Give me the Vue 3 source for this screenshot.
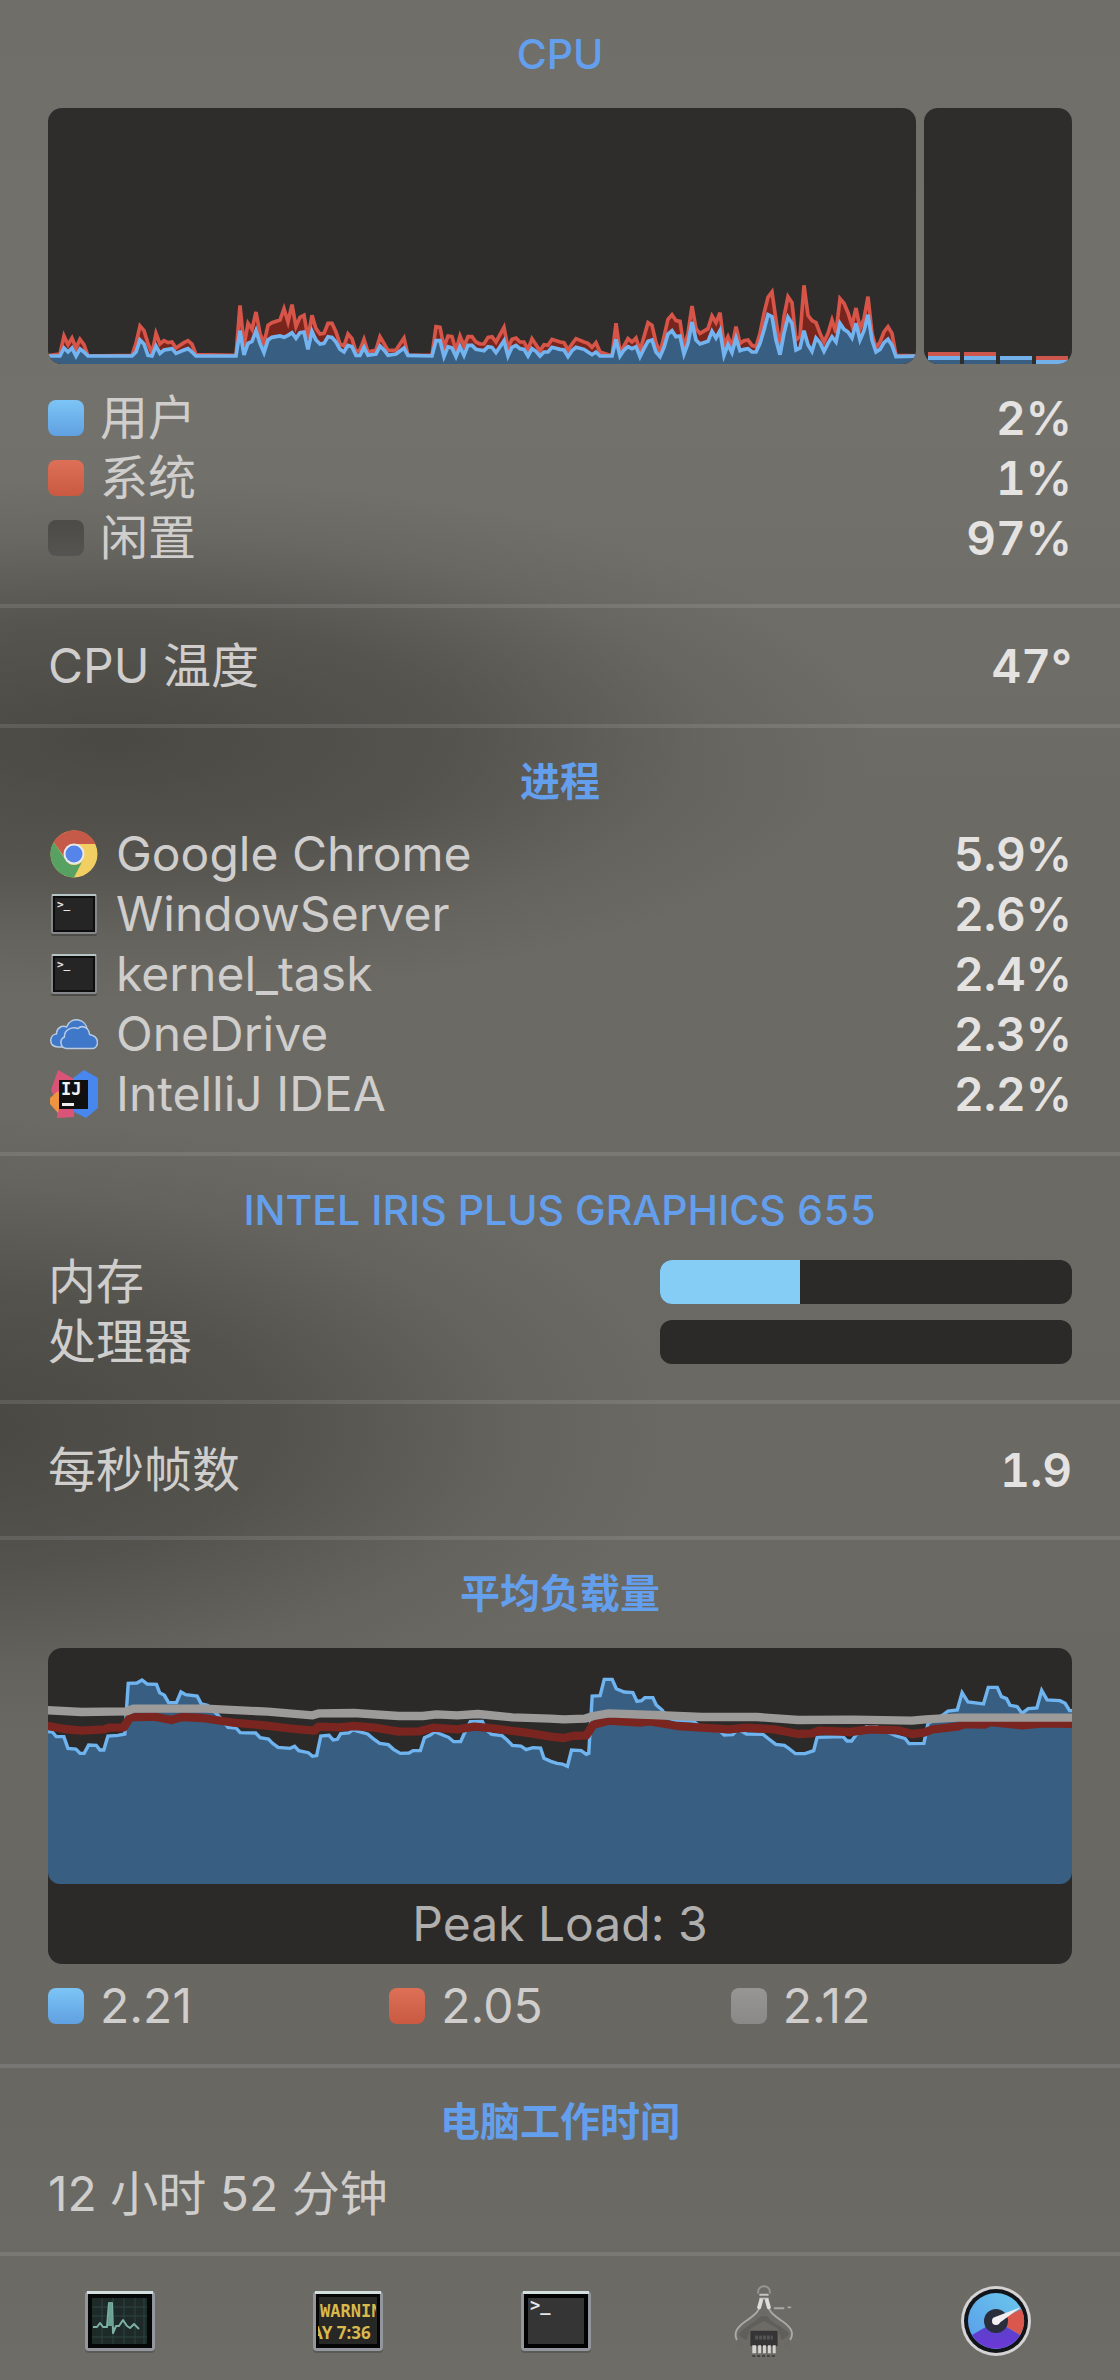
<script setup>
const usage = [
  { label: '用户', value: '2%', tone: 'blue' },
  { label: '系统', value: '1%', tone: 'red' },
  { label: '闲置', value: '97%', tone: 'dark' },
]

const processes = [
  { name: 'Google Chrome', value: '5.9%', icon: 'chrome' },
  { name: 'WindowServer', value: '2.6%', icon: 'terminal' },
  { name: 'kernel_task', value: '2.4%', icon: 'terminal' },
  { name: 'OneDrive', value: '2.3%', icon: 'onedrive' },
  { name: 'IntelliJ IDEA', value: '2.2%', icon: 'intellij' },
]

const gpu = [
  { label: '内存', percent: 34 },
  { label: '处理器', percent: 0 },
]

const loads = [
  { value: '2.21', tone: 'blue' },
  { value: '2.05', tone: 'red' },
  { value: '2.12', tone: 'grey' },
]

const cores = [
  ['red', 'light', 'deep'],
  ['red', 'light', 'deep'],
  ['light', 'deep'],
  ['red', 'light'],
]

// Each series is stored in two halves; the second half starts at its own zero.
const join = (first, second, offset) =>
  first + ' ' + second.split(' ').map((p) => {
    const [x, y] = p.split(',').map(Number)
    return `${x + offset},${y}`
  }).join(' ')

const userLine = join(
  '12,288 60,288 72,264 84,276 96,264 108,288 120,267 132,276 144,288 276,288 288,276 300,240 312,252 324,286 336,288 348,258 360,280 372,270 384,268 396,266 408,280 432,270 444,266 456,276 468,288 588,288 600,212 612,285 624,250 636,244 648,212 660,250 672,278 684,240 696,232 720,228 732,232 744,226 756,218 768,235 780,218 792,216 804,268 816,214 828,240 840,252 852,250 864,230 876,232 888,246 900,268 912,276 924,256 936,260 948,286 960,286 972,262 984,286 1008,282 1020,258 1032,270 1044,286 1068,282 1092,264 1104,286 1176,288 1188,242 1200,242 1212,290 1224,260 1236,264 1248,290 1260,260 1272,286 1284,256 1296,256 1308,268',
  '0,270 12,272 24,260 36,262 48,278 72,242 84,288 96,262 108,256 120,266 132,268 144,288 156,266 168,274 180,288 192,276 204,276 216,262 240,268 252,270 264,290 276,272 288,262 312,268 324,276 336,284 348,276 360,288 396,288 408,238 420,288 432,270 444,260 456,266 468,260 480,290 492,266 504,244 516,240 528,276 540,290 552,262 564,222 576,212 588,230 600,228 612,282 624,250 636,186 648,240 660,252 684,244 696,214 708,234 720,212 732,286 744,254 756,278 768,234 780,272 792,268 804,266 816,276 828,276 840,250 852,210 864,164 876,170 888,240 900,284 912,220 924,172 936,190 948,270 960,264 972,212 984,254 996,274 1008,234 1020,248 1032,274 1044,250 1056,230 1068,246 1080,190 1092,208 1104,216 1116,234 1128,190 1140,240 1152,212 1164,164 1176,240 1188,276 1200,268 1212,248 1224,238 1236,256 1248,290 1320,288',
  1320,
)
const systemLine = join(
  '12,288 60,282 72,228 84,254 96,234 108,264 120,238 132,254 144,288 276,286 288,250 300,198 312,212 324,250 336,280 348,220 360,252 372,242 384,248 396,246 408,264 432,248 444,242 456,252 468,284 588,286 600,136 612,258 624,190 636,208 648,156 660,220 672,250 684,196 696,188 720,180 732,146 744,186 756,134 768,200 780,172 792,166 804,235 816,166 828,206 840,222 852,220 864,190 876,190 888,216 900,252 912,258 924,222 936,236 948,276 960,270 972,238 984,276 1008,270 1020,230 1032,250 1044,272 1068,270 1092,234 1104,286 1176,286 1188,200 1200,202 1212,262 1224,228 1236,230 1248,272 1260,228 1272,258 1284,230 1296,230 1308,246',
  '0,252 12,252 24,232 36,230 48,246 72,202 84,264 96,238 108,234 120,246 132,246 144,268 156,236 168,254 180,272 192,254 204,256 216,238 240,246 252,248 264,270 276,252 288,236 312,246 324,250 336,262 348,248 360,276 396,288 408,190 420,276 432,258 444,236 456,246 468,234 480,272 492,230 504,188 516,196 528,248 540,278 552,230 564,178 576,164 588,182 600,184 612,262 624,220 636,138 648,206 660,220 684,206 696,168 708,188 720,158 732,256 744,230 756,260 768,200 780,250 792,242 804,240 816,256 828,260 840,220 852,160 864,112 876,96 888,180 900,264 912,170 924,110 936,128 948,240 960,230 972,76 984,166 996,182 1008,188 1020,220 1032,246 1044,220 1056,180 1068,218 1080,116 1092,130 1104,158 1116,196 1128,144 1140,206 1152,176 1164,110 1176,220 1188,264 1200,246 1212,216 1224,200 1236,220 1248,286 1320,288',
  1320,
)

const loadOne = join(
  '40,303 65,306 76,320 98,320 110,355 133,357 145,370 157,370 170,345 192,346 203,360 214,360 226,318 255,316 275,312 285,160 310,159 325,150 340,162 367,163 376,188 390,196 402,218 425,218 438,186 452,194 485,198 497,222 515,226 545,255 575,292 598,294 610,308 655,309 668,323 692,327 704,340 720,352 755,355 768,349 780,362 808,368 820,379 832,377 844,318 868,316 880,330 892,328 902,311 925,309 937,300 955,305 980,312 995,325 1015,340 1040,344 1055,358 1075,370 1100,369 1112,362 1133,362 1145,323 1162,315 1175,305 1198,315 1215,322 1230,335 1250,335 1260,312 1278,275 1313,274 1325,300 1340,313 1370,317 1385,330 1400,346 1425,348 1440,359 1460,353 1482,354 1492,385 1512,394 1530,400',
  '35,402 50,409 62,360 90,362 105,373 112,370 122,198 145,197 157,148 180,148 192,176 215,186 240,188 252,214 265,212 275,203 298,203 308,225 325,240 340,262 362,272 415,273 430,285 495,305 505,315 530,314 545,298 570,312 618,313 632,325 655,343 680,346 695,357 712,371 740,371 765,362 775,322 850,320 862,333 875,333 888,315 918,290 948,290 965,300 1005,318 1030,325 1042,341 1085,340 1097,280 1140,255 1155,243 1182,240 1196,188 1213,216 1258,222 1272,172 1298,172 1310,200 1325,206 1335,226 1356,230 1370,250 1388,236 1413,234 1427,181 1443,210 1480,212 1495,220 1508,242 1530,242',
  1510,
)
const loadFive = join(
  '40,286 100,297 150,302 215,298 230,293 272,292 290,262 360,260 410,270 440,261 500,264 590,278 680,286 760,296 825,302 838,290 900,292 940,288 1000,293 1070,305 1130,304 1170,293 1240,298 1290,290 1350,296 1440,308 1490,316',
  '0,320 40,324 65,318 105,316 125,284 170,272 260,278 290,274 370,288 440,293 520,298 570,293 650,298 720,312 760,310 780,302 870,306 930,298 1010,301 1050,312 1085,308 1110,298 1180,290 1205,282 1260,284 1280,276 1370,286 1430,280 1530,282',
  1510,
)
const loadFifteen = join(
  '40,240 150,246 280,244 300,236 510,236 690,245 820,256 840,250 940,249 1070,258 1140,258 1180,253 1240,256 1300,252 1400,262',
  '0,266 40,268 100,266 125,258 170,250 300,255 440,261 600,261 720,270 880,269 1050,272 1090,268 1180,263 1530,263',
  1510,
)
</script>

<template>
  <main class="panel">
    <section class="block">
      <h2 class="title lead">CPU</h2>
      <div class="cpu">
        <svg class="history" viewBox="24 -456 2604 768" preserveAspectRatio="none" role="img" aria-label="CPU">
          <polygon :points="`12,312 ${systemLine} 2640,312`" fill="#78251d" />
          <polyline :points="systemLine" fill="none" stroke="#d65448" stroke-width="11" />
          <polygon :points="`12,312 ${userLine} 2640,312`" fill="#385f82" />
          <polyline :points="userLine" fill="none" stroke="#73b4f0" stroke-width="11" />
        </svg>
        <div class="cores">
          <div v-for="(core, i) in cores" :key="i" class="core">
            <i v-for="part in core" :key="part" :class="part"></i>
          </div>
        </div>
      </div>
      <dl class="usage">
        <div v-for="u in usage" :key="u.label" class="row">
          <dt><span class="swatch" :class="u.tone"></span>{{ u.label }}</dt>
          <dd>{{ u.value }}</dd>
        </div>
      </dl>
    </section>

    <section class="block">
      <dl class="row">
        <dt>CPU 温度</dt>
        <dd>47°</dd>
      </dl>
    </section>

    <section class="block">
      <h2 class="title han">进程</h2>
      <table class="processes">
        <tbody>
          <tr v-for="p in processes" :key="p.name">
            <th scope="row">
              <div class="process">
                <svg v-if="p.icon === 'chrome'" class="app" viewBox="0 0 48 48" aria-hidden="true">
                  <circle cx="24" cy="24" r="23.500" fill="#f1cf63" />
                  <path d="M3.600 12.300A23.500 23.500 0 0 1 45.600 14H24a10 10 0 0 0-9 14z" fill="#c65a49" />
                  <path d="M3.600 12.300A23.500 23.500 0 0 0 24 47.500L34 28a10 10 0 0 1-18.500 1.500z" fill="#57a163" />
                  <circle cx="24" cy="24" r="10.500" fill="#e9e9ea" />
                  <circle cx="24" cy="24" r="8.500" fill="#5585ea" />
                </svg>
                <svg v-else-if="p.icon === 'terminal'" class="app" viewBox="0 0 48 48" aria-hidden="true">
                  <rect x="1" y="5" width="46" height="41" rx="2" fill="#4e4c49" />
                  <rect x="1" y="4" width="46" height="40" rx="2" fill="#84888b" />
                  <path d="M2 4h44v2H2z" fill="#b6c4c5" />
                  <rect x="3" y="6" width="42" height="36" fill="#0d0d0d" />
                  <rect x="5" y="8" width="38" height="32" fill="#252525" />
                  <text x="7" y="18" class="prompt">&gt;_</text>
                </svg>
                <svg v-else-if="p.icon === 'onedrive'" class="app" viewBox="0 0 48 48" aria-hidden="true">
                  <g fill="#3f78c8" stroke="#b9cbe3" stroke-width="1.500" stroke-linejoin="round">
                    <path d="M8 37C2 37 .5 33 .8 29.500 1.200 26 4 24 6.500 24 6.500 18 12 15 16.500 17 19 11 24 9 28.500 10c5 1 8 5 8.500 9v18z" />
                    <path d="M17 38.500c-7 0-8-9-2.500-11.500C14 20 22 16 28 18.500c4-4 11-1 11.500 6 5 1 8 4 8 8 0 3-2 6-5 6z" />
                  </g>
                </svg>
                <svg v-else class="app" viewBox="0 0 48 48" aria-hidden="true">
                  <path d="M8 0l18 10-2 37-17 1 1-12-7-16z" fill="#d95478" />
                  <path d="M0 28l8-7 8 10-8 12-8-9z" fill="#ee9440" />
                  <path d="M10 34l-3 14 20-9z" fill="#d95478" />
                  <path d="M23 8L34 0l14 8v30L36 48 24 42z" fill="#4787ee" />
                  <rect x="9" y="10" width="29" height="29" fill="#101010" />
                  <text x="11" y="25" class="ij">IJ</text>
                  <path d="M12 33h12v3H12z" fill="#eee" />
                </svg>
                {{ p.name }}
              </div>
            </th>
            <td>{{ p.value }}</td>
          </tr>
        </tbody>
      </table>
    </section>

    <section class="block">
      <h2 class="title">INTEL IRIS PLUS GRAPHICS 655</h2>
      <dl>
        <div v-for="g in gpu" :key="g.label" class="row">
          <dt>{{ g.label }}</dt>
          <dd class="bar"><div class="fill" :style="{ width: g.percent + '%' }"></div></dd>
        </div>
      </dl>
    </section>

    <section class="block roomy">
      <dl class="row">
        <dt>每秒帧数</dt>
        <dd>1.9</dd>
      </dl>
    </section>

    <section class="block">
      <h2 class="title lead han">平均负载量</h2>
      <figure class="load">
        <svg class="load-plot" viewBox="52 54 2973 708" preserveAspectRatio="none" role="img" aria-label="平均负载量">
          <polygon :points="`40,762 ${loadOne} 3040,762`" fill="#385f82" />
          <polyline :points="loadOne" fill="none" stroke="#6fb3ef" stroke-width="10" />
          <polyline :points="loadFive" fill="none" stroke="#7a251f" stroke-width="25" stroke-linejoin="round" />
          <polyline :points="loadFifteen" fill="none" stroke="#9d9b9a" stroke-width="25" stroke-linejoin="round" />
        </svg>
        <figcaption>Peak Load: 3</figcaption>
      </figure>
      <ul class="averages">
        <li v-for="l in loads" :key="l.value"><span class="swatch" :class="l.tone"></span>{{ l.value }}</li>
      </ul>
    </section>

    <section class="block">
      <h2 class="title han">电脑工作时间</h2>
      <p class="row">12 小时 52 分钟</p>
    </section>

    <nav class="dock">
      <button type="button" aria-label="Activity Monitor">
        <svg viewBox="0 0 72 64" aria-hidden="true">
          <rect x="1" y="3" width="70" height="61" rx="4" fill="#5c5a59" />
          <rect x="1" y="2" width="70" height="60" rx="4" fill="#93969c" />
          <path d="M3 2h66v3H3z" fill="#d3dfdf" />
          <rect x="4" y="5" width="64" height="54" fill="#060807" />
          <rect x="8" y="9" width="55" height="46" fill="#1d2a28" />
          <path d="M8 18h55M8 27h55M8 48h55M18 9v46M29 9v46M40 9v46M51 9v46M60 9v46" stroke="#2f443f" stroke-width="1" />
          <path d="M9 38h4l3-4 3 4h4l2-24h3l1 30 3-7h3l4-6 4 6 3 2 4-4 5 5" fill="none" stroke="#7fb0a4" stroke-width="2" stroke-linejoin="round" />
          <path d="M24 37l1-24h3l1 24z" fill="#6aa394" />
        </svg>
      </button>
      <button type="button" aria-label="Console">
        <svg viewBox="0 0 72 64" aria-hidden="true">
          <defs><clipPath id="console-screen"><rect x="6" y="8" width="58" height="48" /></clipPath></defs>
          <rect x="1" y="3" width="70" height="61" rx="4" fill="#5c5a59" />
          <rect x="1" y="2" width="70" height="60" rx="4" fill="#93969c" />
          <path d="M3 2h66v3H3z" fill="#d3dfdf" />
          <rect x="4" y="5" width="64" height="54" fill="#060606" />
          <rect x="7" y="8" width="58" height="47" fill="#272726" />
          <g clip-path="url(#console-screen)">
            <text x="8" y="28" class="console">WARNIN</text>
            <text x="-1" y="50" class="console clock">AY 7:36</text>
          </g>
        </svg>
      </button>
      <button type="button" aria-label="Terminal">
        <svg viewBox="0 0 72 64" aria-hidden="true">
          <rect x="1" y="3" width="70" height="61" rx="4" fill="#5c5a59" />
          <rect x="1" y="2" width="70" height="60" rx="4" fill="#93969c" />
          <path d="M3 2h66v3H3z" fill="#d3dfdf" />
          <rect x="4" y="5" width="64" height="54" fill="#020202" />
          <rect x="8" y="9" width="56" height="46" fill="#353535" />
          <text x="10" y="22" class="prompt big">&gt;_</text>
        </svg>
      </button>
      <button type="button" aria-label="System Information">
        <svg class="tall" viewBox="0 0 64 76" aria-hidden="true">
          <path d="M29 33C19 42 8 46 6 53l8 5 4-12 14-8 14 8 4 12 8-6C57 46 42 42 35 33z" fill="#615f5b" />
          <g fill="none" stroke-linecap="round">
            <path d="M26 9c-1-9 13-9 12 0" stroke="#989692" stroke-width="2" />
            <path d="M28 11h8M28 15h8" stroke="#c5c4c2" stroke-width="2" />
            <path d="M29 18c-1 10-7 14-14 19C6 43 0 49 4 57" stroke="#aaa9a7" stroke-width="2" />
            <path d="M35 18c1 10 7 14 14 19 9 6 15 12 10 20" stroke="#aaa9a7" stroke-width="2" />
            <path d="M29 17l-2 7M35 17l2 7" stroke="#dddcda" stroke-width="4" />
            <path d="M43 25h9M57 24h2" stroke="#aaa8a5" stroke-width="2" />
            <path d="M5 58l4 5M58 58l-4 5" stroke="#6b6966" stroke-width="2" />
          </g>
          <rect x="18" y="48" width="28" height="16" rx="1" fill="#353535" />
          <path d="M23 55h18" stroke="#555" stroke-width="4" stroke-dasharray="3 1" />
          <path d="M20 63h4v8h-4zM26 63h3v8h-3zM31 63h3v8h-3zM36 63h3v8h-3zM41 63h3v8h-3z" fill="#d4d3d1" />
          <path d="M20 74h25" stroke="#444340" stroke-width="2" stroke-dasharray="3 2" />
        </svg>
      </button>
      <button type="button" aria-label="iStat Menus">
        <svg class="tall" viewBox="0 0 72 72" aria-hidden="true">
          <defs>
            <linearGradient id="dial-top" x1="0" y1="1" x2="1" y2="0"><stop offset="0" stop-color="#589bea" /><stop offset="1" stop-color="#6bc8eb" /></linearGradient>
            <linearGradient id="dial-low" x1="0" y1="0" x2="0" y2="1"><stop offset="0" stop-color="#5545c8" /><stop offset="1" stop-color="#6d38d7" /></linearGradient>
          </defs>
          <circle cx="36" cy="36" r="35" fill="#d5d2d3" />
          <circle cx="36" cy="36" r="32" fill="#111519" />
          <circle cx="36" cy="36" r="28" fill="url(#dial-top)" />
          <path d="M36 36L61.500 24A28 28 0 0 1 60 50z" fill="#d9574d" />
          <path d="M36 36L60 50A28 28 0 0 1 12 50z" fill="url(#dial-low)" />
          <circle cx="36" cy="36" r="12" fill="#2a2d3b" />
          <path d="M35 32L61 22 38 39z" fill="#efedf0" />
          <circle cx="36" cy="36" r="4" fill="#f3f1f3" />
        </svg>
      </button>
    </nav>
  </main>
</template>

<style>
body {
  margin: 0;
}
</style>

<style scoped>
.panel {
  color: #cfcecc;
  font-family: Inter, "Noto Sans CJK SC", sans-serif;
  font-size: 48px;
  line-height: 60px;
  background:
    radial-gradient(ellipse 68% 11% at 10% 31%, rgba(66, 64, 59, 0.8), rgba(66, 64, 59, 0.55) 45%, rgba(66, 64, 59, 0.15) 78%, transparent),
    radial-gradient(ellipse 64% 13% at -4% 60%, rgba(66, 64, 59, 0.82), rgba(66, 64, 59, 0.55) 45%, rgba(66, 64, 59, 0.15) 78%, transparent),
    linear-gradient(#6f6e69, #73716c 18%, #6c6a64 34%, #6b6963 60%, #696762 88%, #6e6c67);
}

dl,
dd,
p,
ul,
h2,
figure {
  margin: 0;
  padding: 0;
}

.block {
  padding: 30px 48px 28px;
  border-bottom: 4px solid rgba(255, 255, 255, 0.1);
}

.block:first-child {
  padding-bottom: 36px;
}

.block:has(> dl.row) {
  padding-top: 28px;
}

.block.roomy:has(> dl.row) {
  padding-top: 36px;
  padding-bottom: 36px;
}

.title {
  margin-bottom: 18px;
  color: #649fee;
  font-size: 41px;
  font-variant-numeric: tabular-nums;
  font-weight: 500;
  line-height: 48px;
  text-align: center;
}

.title.lead {
  margin-bottom: 30px;
}

.title.han {
  font-size: 40px;
  font-weight: 600;
}

.row {
  display: flex;
  align-items: center;
  justify-content: space-between;
  height: 60px;
}

dt {
  display: flex;
  align-items: center;
  white-space: pre;
}

dd,
td {
  color: #e4e3e2;
  font-size: 46px;
  font-variant-numeric: tabular-nums;
  font-weight: 600;
}

.cpu {
  display: grid;
  grid-template-columns: minmax(0, 868fr) minmax(0, 148fr);
  gap: 8px;
  height: 256px;
  margin-bottom: 24px;
}

.history,
.cores {
  width: 100%;
  height: 100%;
  background: #2e2d2b;
  border-radius: 14px;
}

.cores {
  display: flex;
  align-items: flex-end;
  gap: 4px;
  box-sizing: border-box;
  padding: 0 4px;
  overflow: hidden;
}

.core {
  flex: 1;
}

.core i {
  display: block;
  height: 4px;
}

.core .red {
  background: #cf564d;
}

.core .light {
  background: #73b0ea;
}

.core .deep {
  background: #385f82;
}

.swatch {
  flex: none;
  width: 36px;
  height: 36px;
  margin-right: 16px;
  border-radius: 8px;
}

.swatch.blue {
  background: linear-gradient(#7cc5f6, #60a0e1);
}

.swatch.red {
  background: linear-gradient(#dd7057, #c95a41);
}

.swatch.dark {
  background: linear-gradient(#4c4b48, #555451);
}

.swatch.grey {
  background: linear-gradient(#979694, #8a8988);
}

.processes {
  width: 100%;
  border-collapse: collapse;
}

.processes th,
.processes td {
  height: 60px;
  padding: 0;
  text-align: left;
}

.processes th {
  font-weight: 400;
}

.processes td {
  text-align: right;
}

.process {
  display: flex;
  align-items: center;
}

.app {
  width: 48px;
  height: 48px;
  margin: 0 18px 0 2px;
}

.prompt {
  fill: #e6e6e6;
  font: bold 11px "DejaVu Sans Mono", monospace;
}

.prompt.big {
  font-size: 17px;
}

.ij {
  fill: #f2f2f2;
  font: bold 17px "DejaVu Sans Mono", monospace;
}

.bar {
  width: 412px;
  height: 44px;
  overflow: hidden;
  background: #2b2a28;
  border-radius: 12px;
}

.fill {
  height: 100%;
  background: #86cdf6;
}

.load {
  margin-bottom: 12px;
  overflow: hidden;
  background: #2b2a28;
  border-radius: 14px;
}

.load-plot {
  display: block;
  width: 100%;
  height: 236px;
  border-radius: 0 0 12px 12px;
}

figcaption {
  padding: 10px 0;
  color: #b0afae;
  text-align: center;
}

.averages {
  display: grid;
  grid-template-columns: repeat(3, 1fr);
  list-style: none;
}

.averages li {
  display: flex;
  align-items: center;
}

.dock {
  display: grid;
  grid-template-columns: 240fr 216fr 200fr 216fr 248fr;
  align-items: center;
  justify-items: center;
  height: 124px;
}

.dock button {
  display: flex;
  padding: 6px 0 0;
  background: none;
  border: 0;
}

.dock svg {
  width: 72px;
  height: 64px;
}

.dock svg.tall {
  height: 74px;
}

.console {
  fill: #d9b84c;
  font: bold 17px "DejaVu Sans Mono", monospace;
}

.console.clock {
  font-family: "Noto Sans", sans-serif;
}
</style>
